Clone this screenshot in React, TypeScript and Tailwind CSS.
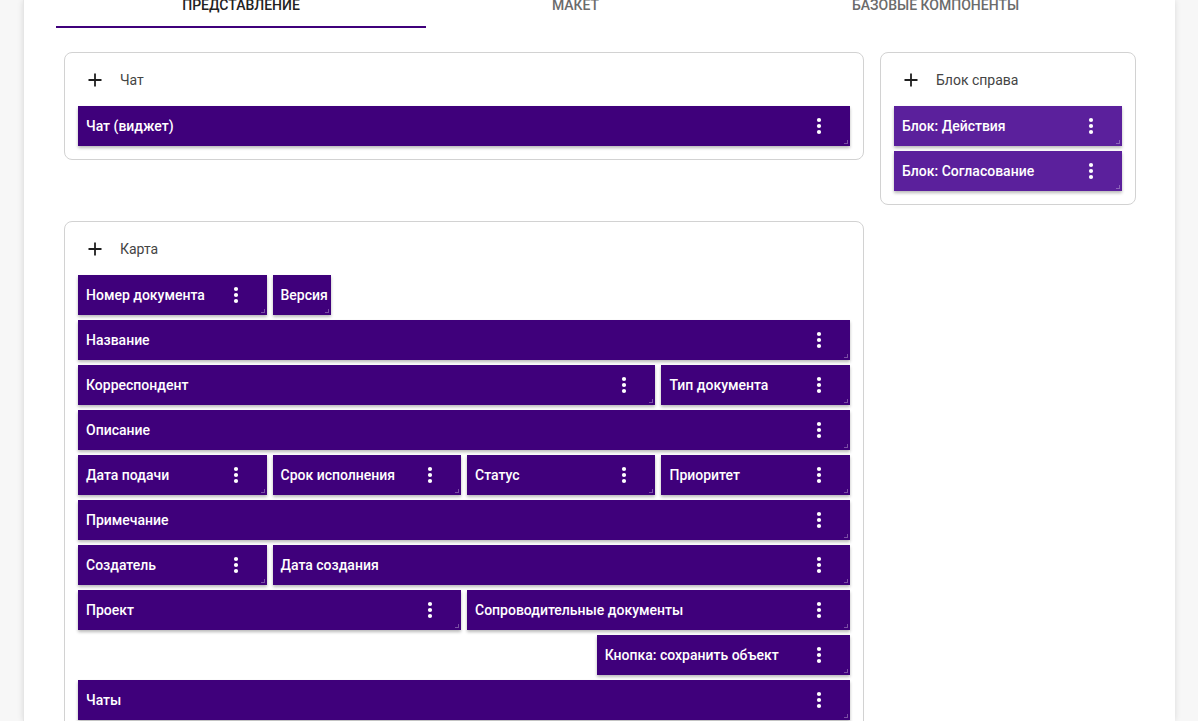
import React from "react";

type Item = { label: string; span: string; dots?: boolean };

const Dots = () => (
  <svg width="24" height="24" viewBox="0 0 24 24" className="shrink-0 mr-[19px]">
    <circle cx="12" cy="6" r="2.1" fill="white" />
    <circle cx="12" cy="12" r="2.1" fill="white" />
    <circle cx="12" cy="18" r="2.1" fill="white" />
  </svg>
);

const Plus = () => (
  <svg width="14" height="14" viewBox="0 0 14 14" className="shrink-0">
    <path d="M7 0.5V13.5M0.5 7H13.5" stroke="#1f1f1f" strokeWidth="1.8" />
  </svg>
);

function Widget({ label, dots = true, light = false, className = "" }: { label: string; dots?: boolean; light?: boolean; className?: string }) {
  return (
    <div
      className={`relative h-[40px] flex items-center justify-between overflow-hidden ${light ? "bg-[#5b209c]" : "bg-[#3f007b]"} shadow-[0_2px_3px_rgba(0,0,0,0.28)] ${className}`}
    >
      <span className="pl-[8px] text-white text-[14px] font-medium whitespace-nowrap">{label}</span>
      {dots && <Dots />}
      <span className="absolute right-[2px] bottom-[2px] w-[4px] h-[4px] border-r border-b border-white/30" />
    </div>
  );
}

function CardHeader({ title }: { title: string }) {
  return (
    <div className="h-[28px] flex items-center pl-[10px] mb-[12px]">
      <Plus />
      <span className="ml-[18px] text-[14px] text-[#444]">{title}</span>
    </div>
  );
}

const rows: Item[] = [
  { label: "Номер документа", span: "col-span-3" },
  { label: "Версия", span: "col-span-1", dots: false },
  { label: "Название", span: "col-span-12" },
  { label: "Корреспондент", span: "col-span-9" },
  { label: "Тип документа", span: "col-span-3" },
  { label: "Описание", span: "col-span-12" },
  { label: "Дата подачи", span: "col-span-3" },
  { label: "Срок исполнения", span: "col-span-3" },
  { label: "Статус", span: "col-span-3" },
  { label: "Приоритет", span: "col-span-3" },
  { label: "Примечание", span: "col-span-12" },
  { label: "Создатель", span: "col-span-3" },
  { label: "Дата создания", span: "col-span-9" },
  { label: "Проект", span: "col-span-6" },
  { label: "Сопроводительные документы", span: "col-span-6" },
  { label: "Кнопка: сохранить объект", span: "col-start-9 col-span-4" },
  { label: "Чаты", span: "col-span-12" },
];

export default function App() {
  return (
    <div className="w-[1198px] h-[721px] overflow-hidden bg-[#f7f7f7] font-['Roboto',sans-serif]">
      <div className="ml-[23px] w-[1152px] h-[721px] bg-white border-l border-[#e6e6e6] shadow-[0_0_6px_rgba(0,0,0,0.12)] overflow-hidden">
        {/* Tabs */}
        <div className="flex ml-[32px] h-[28px]">
          <div className="relative w-[370px] h-[28px] flex justify-center">
            <span className="mt-[-3px] leading-[16px] text-[14px] font-medium uppercase text-[#222]">Представление</span>
            <span className="absolute left-0 right-0 bottom-0 h-[2px] bg-[#3f007b]" />
          </div>
          <div className="w-[299px] h-[28px] flex justify-center">
            <span className="mt-[-3px] leading-[16px] text-[14px] font-medium uppercase text-[#6b6b6b]">Макет</span>
          </div>
          <div className="w-[421px] h-[28px] flex justify-center">
            <span className="mt-[-3px] leading-[16px] text-[14px] font-medium uppercase text-[#6b6b6b]">Базовые компоненты</span>
          </div>
        </div>

        {/* Content */}
        <div className="flex items-start ml-[40px] mt-[24px]">
          <div className="w-[800px]">
            <div className="border border-[#d2d2d2] rounded-[8px] p-[13px]">
              <CardHeader title="Чат" />
              <Widget label="Чат (виджет)" />
            </div>
            <div className="mt-[61px] border border-[#d2d2d2] rounded-[8px] p-[13px]">
              <CardHeader title="Карта" />
              <div className="grid grid-cols-12 gap-x-[6px] gap-y-[5px]">
                {rows.map((r) => (
                  <Widget key={r.label} label={r.label} dots={r.dots !== false} className={r.span} />
                ))}
              </div>
            </div>
          </div>
          <div className="ml-[16px] w-[256px] border border-[#d2d2d2] rounded-[8px] p-[13px]">
            <CardHeader title="Блок справа" />
            <div className="flex flex-col gap-[5px]">
              <Widget label="Блок: Действия" light />
              <Widget label="Блок: Согласование" light />
            </div>
          </div>
        </div>
      </div>
    </div>
  );
}
